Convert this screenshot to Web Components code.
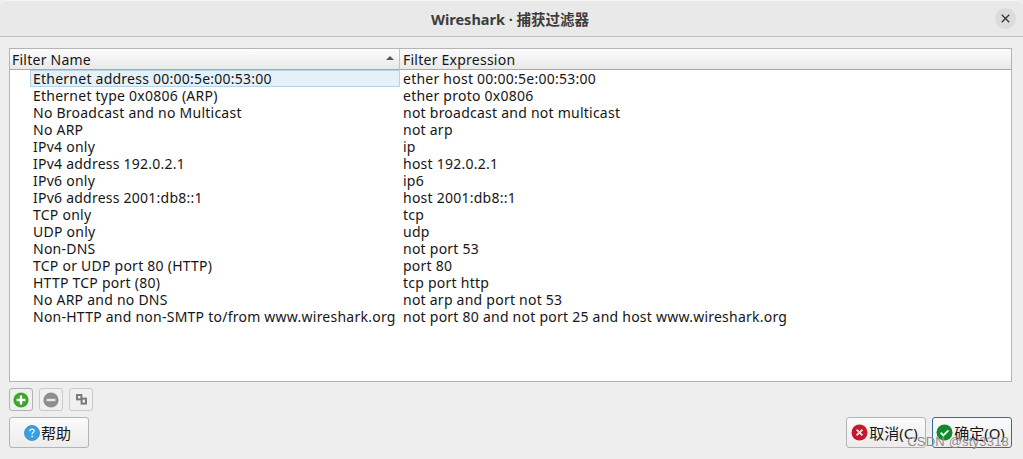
<!DOCTYPE html>
<html>
<head>
<meta charset="utf-8">
<style>
html, body { margin: 0; padding: 0; background: #eeeeee; }
body { width: 1023px; height: 459px; overflow: hidden; font-family: "Noto Sans", "Noto Sans CJK SC", sans-serif; font-size: 14px; letter-spacing: .24px; color: #161616; }
</style>
</head>
<body>
<capture-dialog>
  <filter-table></filter-table>
</capture-dialog>

<script>
const filtros = [
    ["Ethernet address 00:00:5e:00:53:00", "ether host 00:00:5e:00:53:00"],
    ["Ethernet type 0x0806 (ARP)", "ether proto 0x0806"],
    ["No Broadcast and no Multicast", "not broadcast and not multicast"],
    ["No ARP", "not arp"],
    ["IPv4 only", "ip"],
    ["IPv4 address 192.0.2.1", "host 192.0.2.1"],
    ["IPv6 only", "ip6"],
    ["IPv6 address 2001:db8::1", "host 2001:db8::1"],
    ["TCP only", "tcp"],
    ["UDP only", "udp"],
    ["Non-DNS", "not port 53"],
    ["TCP or UDP port 80 (HTTP)", "port 80"],
    ["HTTP TCP port (80)", "tcp port http"],
    ["No ARP and no DNS", "not arp and port not 53"],
    ["Non-HTTP and non-SMTP to/from www.wireshark.org", "not port 80 and not port 25 and host www.wireshark.org"]
];

const iconos = {
    add: `<svg width="16" height="16" viewBox="0 0 16 16"><circle cx="8" cy="8" r="7.6" fill="#3da52b"/><path d="M8 3.6v8.8M3.6 8h8.8" stroke="#fff" stroke-width="2.4"/></svg>`,
    remove: `<svg width="16" height="16" viewBox="0 0 16 16"><circle cx="8" cy="8" r="7.6" fill="#8e8e8e"/><path d="M3.6 8h8.8" stroke="#e8e8e8" stroke-width="2.4"/></svg>`,
    copy: `<svg width="11" height="11" viewBox="0 0 11 11" fill="none" stroke="#777" stroke-width="1.9"><rect x="1" y="1" width="4.4" height="4.4"/><rect x="5.6" y="4.6" width="4.4" height="5"/></svg>`,
    help: `<svg width="16" height="16" viewBox="0 0 16 16"><circle cx="8" cy="8" r="7.5" fill="#35a0e6" stroke="#4a7ea6" stroke-width=".8"/><path d="M5.9 6.2c0-1.3 1-2 2.2-2s2.1.8 2.1 1.8c0 1.6-2.1 1.6-2.1 3.2" fill="none" stroke="#e6f4fd" stroke-width="1.3"/><circle cx="8.1" cy="11.4" r=".9" fill="#e6f4fd"/></svg>`,
    cancel: `<svg width="17" height="17" viewBox="0 0 17 17"><circle cx="8.5" cy="8.5" r="8" fill="#c8162f"/><path d="M5.6 5.6l5.8 5.8M11.4 5.6l-5.8 5.8" stroke="#f6dfe2" stroke-width="2"/></svg>`,
    ok: `<svg width="17" height="17" viewBox="0 0 17 17"><circle cx="8.5" cy="8.5" r="8" fill="#14872f"/><path d="M4.7 8.8l2.7 2.6 5-5" fill="none" stroke="#eef8ef" stroke-width="2"/></svg>`
};

class ToolButton extends HTMLElement {
    connectedCallback() {
        const nombre = this.getAttribute('icon');
        this.attachShadow({ mode: 'open' }).innerHTML = `
            <style>
                :host { display: flex; width: 22px; height: 21px; align-items: center; justify-content: center;
                    border: 1px solid #cacaca; border-radius: 3px; background: #f0f0f0; }
                :host([main]) { border-color: #b2b2b2; }
                svg { display: block; }
            </style>
            ${iconos[nombre]}
        `;
    }
}
customElements.define('tool-button', ToolButton);

class DialogButton extends HTMLElement {
    connectedCallback() {
        const nombre = this.getAttribute('icon');
        this.attachShadow({ mode: 'open' }).innerHTML = `
            <style>
                :host { display: flex; height: 29px; align-items: center; justify-content: center; gap: 1px;
                    border: 1px solid #b4b4b4; border-radius: 3px; background: linear-gradient(#fbfbfb, #ececec);
                    font-size: 15px; letter-spacing: 0; color: #161616; box-sizing: border-box; height: 31px; padding-right: 3px; }
                :host([default]) { border-color: #2f6f9f; }
                svg { display: block; flex: none; }
            </style>
            ${iconos[nombre]}<slot></slot>
        `;
    }
}
customElements.define('dialog-button', DialogButton);

class FilterTable extends HTMLElement {
    connectedCallback() {
        const filas = filtros.map(([nom, expr], i) => `
            <div class="row${i === 0 ? ' sel' : ''}">
                <div class="name"><span>${nom}</span></div>
                <div class="expr">${expr}</div>
            </div>`).join('');
        this.attachShadow({ mode: 'open' }).innerHTML = `
            <style>
                :host { display: block; height: 332px; border: 1px solid #b4b4b4; background: #fff; box-sizing: content-box; overflow: hidden; }
                .head { display: grid; grid-template-columns: 390px 1fr; height: 20px; border-bottom: 1px solid #a9a9a9;
                    background: linear-gradient(#fcfcfc, #e9e9e9); line-height: 21px; }
                .head div { padding-left: 2px; white-space: nowrap; }
                .head .first { display: flex; justify-content: space-between; align-items: center; border-right: 1px solid #c4c4c4; padding-right: 5px; }
                .head .second { padding-left: 3px; }
                .arrow { width: 0; height: 0; border: 4px solid transparent; border-top: 0; border-bottom: 4px solid #555; margin-top: -3px; }
                .row { display: grid; grid-template-columns: 390px 1fr; height: 17px; line-height: 17px; white-space: nowrap; }
                .name { padding-left: 20px; }
                .name span { display: block; padding-left: 3px; height: 17px; box-sizing: border-box; }
                .expr { padding-left: 3px; }
                .sel .name span { background: #e4f1f9; box-shadow: inset 0 0 0 1px #b6d2e5; }
            </style>
            <div class="head">
                <div class="first">Filter Name<span class="arrow"></span></div>
                <div class="second">Filter Expression</div>
            </div>
            ${filas}
        `;
    }
}
customElements.define('filter-table', FilterTable);

class CaptureDialog extends HTMLElement {
    connectedCallback() {
        this.attachShadow({ mode: 'open' }).innerHTML = `
            <style>
                :host { display: block; position: relative; width: 1023px; height: 459px; background: #eeeeee; overflow: hidden; }
                header { display: grid; grid-template-columns: 1fr auto 1fr; align-items: center; height: 36px; border-bottom: 1px solid #bdbdbd;
                    background: #e9e9e9; border-radius: 6px 6px 0 0; box-shadow: inset 0 1px 0 #f4f4f4; }
                .title { font-weight: 700; font-size: 14.5px; letter-spacing: 0; color: #3c3c3c; padding: 1px 3px 0 0; }
                .close { justify-self: end; width: 21px; height: 21px; margin-right: 7px; border-radius: 50%; background: #dcdcdc;
                    display: flex; align-items: center; justify-content: center; }
                main { padding: 11px 11px 0 9px; }
                .tools { display: flex; gap: 6px; margin-top: 6px; }
                footer { display: flex; margin-top: 6px; gap: 6px; }
                .help { width: 80px; }
                .cancel { width: 80px; margin-left: auto; }
                .ok { width: 80px; }
                .mark { position: absolute; right: 14px; top: 434px; font: 13px "Liberation Sans", sans-serif; letter-spacing: .2px;
                    color: rgba(110,110,110,.8); text-shadow: 0 0 1px rgba(255,255,255,.7); }
            </style>
            <header>
                <span></span>
                <div class="title">Wireshark · 捕获过滤器</div>
                <div class="close"><svg width="9" height="9" viewBox="0 0 9 9"><path d="M.8.8l7.4 7.4M8.2.8L.8 8.2" stroke="#333" stroke-width="1.3"/></svg></div>
            </header>
            <main>
                <slot></slot>
                <div class="tools">
                    <tool-button icon="add" main></tool-button>
                    <tool-button icon="remove"></tool-button>
                    <tool-button icon="copy"></tool-button>
                </div>
                <footer>
                    <dialog-button class="help" icon="help">帮助</dialog-button>
                    <dialog-button class="cancel" icon="cancel">取消(C)</dialog-button>
                    <dialog-button class="ok" icon="ok" default>确定(O)</dialog-button>
                </footer>
            </main>
            <div class="mark">CSDN @sty3318</div>
        `;
    }
}
customElements.define('capture-dialog', CaptureDialog);
</script>
</body>
</html>
